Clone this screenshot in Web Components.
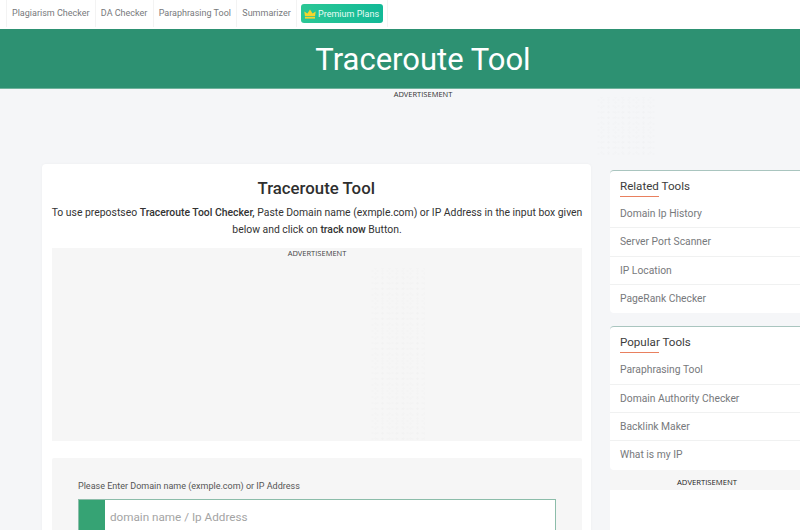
<!DOCTYPE html>
<html>
<head>
<meta charset="utf-8">
<title>Traceroute Tool</title>
<style>
    html, body { margin: 0; height: 530px; overflow: hidden; background: #f5f6f8; }
    body { font-family: Roboto, "Liberation Sans", sans-serif; }
</style>
</head>
<body>
<top-nav></top-nav>
<page-banner>Traceroute Tool</page-banner>
<ad-strip></ad-strip>
<page-layout>
    <tool-card></tool-card>
    <side-box slot="side" heading="Related Tools" items="Domain Ip History|Server Port Scanner|IP Location|PageRank Checker"></side-box>
    <side-box slot="side" heading="Popular Tools" items="Paraphrasing Tool|Domain Authority Checker|Backlink Maker|What is my IP"></side-box>
    <side-ad slot="side"></side-ad>
</page-layout>

<script>
// faint dotted texture left over in the empty ad slots
const speckle = `
    background-image:
        radial-gradient(circle, rgba(0,0,0,0.008) 1px, transparent 1.4px),
        radial-gradient(circle, rgba(0,0,0,0.006) 1px, transparent 1.4px);
    background-size: 5px 6px, 7px 5px;
    background-position: 0 0, 2px 3px;
`;

class TopNav extends HTMLElement {
    constructor() {
        super();
        this.attachShadow({ mode: 'open' });
    }

    connectedCallback() {
        const links = ['Plagiarism Checker', 'DA Checker', 'Paraphrasing Tool', 'Summarizer'];
        this.shadowRoot.innerHTML = `
            <style>
                :host {
                    display: flex;
                    align-items: flex-start;
                    height: 29px;
                    padding-left: 6px;
                    background: #fff;
                    font-size: 9px;
                    color: #77797c;
                }
                a {
                    display: block;
                    height: 27px;
                    line-height: 27px;
                    padding: 0 5.3px 0 5px;
                    border-left: 1px solid #f3f3f3;
                    white-space: nowrap;
                }
                .wrap {
                    display: flex;
                    align-items: center;
                    height: 27px;
                    padding: 0 4px;
                    border-left: 1px solid #f3f3f3;
                    border-right: 1px solid #f3f3f3;
                }
                .premium {
                    display: flex;
                    align-items: center;
                    gap: 2px;
                    box-sizing: border-box;
                    width: 82px;
                    height: 19px;
                    padding-left: 3px;
                    border-radius: 3px;
                    background: linear-gradient(90deg, #2bc795, #12b997);
                    color: #eafbf5;
                    white-space: nowrap;
                }
                svg { flex: none; }
            </style>
            ${links.map(l => `<a>${l}</a>`).join('')}
            <div class="wrap">
                <div class="premium">
                    <svg width="12" height="10" viewBox="0 0 12 10">
                        <path d="M1 7.2 0.3 2.4 3.4 4.4 6 0.6 8.6 4.4 11.7 2.4 11 7.2Z" fill="#f7d52c"/>
                        <rect x="1" y="8" width="10" height="1.6" fill="#f7d52c"/>
                    </svg>
                    <span>Premium Plans</span>
                </div>
            </div>
        `;
    }
}

class PageBanner extends HTMLElement {
    constructor() {
        super();
        this.attachShadow({ mode: 'open' });
    }

    connectedCallback() {
        this.shadowRoot.innerHTML = `
            <style>
                :host {
                    display: block;
                    height: 59px;
                    border-bottom: 1px solid #6fb29c;
                    background: #2d9172;
                    color: #fff;
                    font-size: 31px;
                    line-height: 62px;
                    text-align: center;
                    padding-left: 46px;
                }
            </style>
            <slot></slot>
        `;
    }
}

class AdStrip extends HTMLElement {
    constructor() {
        super();
        this.attachShadow({ mode: 'open' });
    }

    connectedCallback() {
        this.shadowRoot.innerHTML = `
            <style>
                :host {
                    display: flex;
                    justify-content: center;
                    height: 75px;
                    position: relative;
                    padding-left: 46px;
                    font-family: "Open Sans", sans-serif;
                    font-size: 7.5px;
                    line-height: 11px;
                    color: #333;
                }
                .noise {
                    position: absolute;
                    left: 596px;
                    top: 8px;
                    width: 60px;
                    height: 58px;
                    ${speckle}
                }
            </style>
            <span>ADVERTISEMENT</span>
            <div class="noise"></div>
        `;
    }
}

class PageLayout extends HTMLElement {
    constructor() {
        super();
        this.attachShadow({ mode: 'open' });
    }

    connectedCallback() {
        this.shadowRoot.innerHTML = `
            <style>
                :host {
                    display: grid;
                    grid-template-columns: 549px 230px;
                    column-gap: 19px;
                    padding-left: 42px;
                    width: 840px;
                    box-sizing: border-box;
                }
                .side {
                    display: flex;
                    flex-direction: column;
                    padding-top: 6px;
                    gap: 13.3px;
                }
            </style>
            <div><slot></slot></div>
            <div class="side"><slot name="side"></slot></div>
        `;
    }
}

class ToolCard extends HTMLElement {
    constructor() {
        super();
        this.attachShadow({ mode: 'open' });
    }

    connectedCallback() {
        this.shadowRoot.innerHTML = `
            <style>
                :host {
                    display: block;
                    box-sizing: border-box;
                    height: 400px;
                    padding: 14px 9px 0 10px;
                    background: #fff;
                    border-radius: 4px;
                    box-shadow: 0 0 3px rgba(0, 0, 0, 0.04);
                    color: #333;
                }
                h1 {
                    margin: 0 1.5px 0 0;
                    font-size: 16.8px;
                    font-weight: 500;
                    line-height: 20px;
                    text-align: center;
                    color: #2f2f2f;
                }
                p {
                    margin: 6px -3px 0;
                    font-size: 10.4px;
                    line-height: 17px;
                    text-align: center;
                }
                b { font-weight: 500; }
                .ad {
                    position: relative;
                    height: 193px;
                    margin-top: 10px;
                    background: #f6f6f6;
                    text-align: center;
                    font-family: "Open Sans", sans-serif;
                    font-size: 7.5px;
                    line-height: 10px;
                    color: #444;
                }
                .noise {
                    position: absolute;
                    left: 318px;
                    top: 20px;
                    width: 55px;
                    height: 172px;
                    ${speckle}
                }
                form {
                    display: block;
                    height: 100px;
                    margin-top: 17px;
                    padding: 22px 26px 0;
                    background: #f6f6f6;
                    border-radius: 2px;
                }
                label {
                    display: block;
                    font-size: 9px;
                    line-height: 13px;
                    color: #555;
                }
                .field {
                    display: flex;
                    height: 40px;
                    margin-top: 6px;
                    border: 1px solid #8cbdaa;
                    background: #fff;
                }
                .tag { width: 26px; background: #36a374; }
                .hint {
                    padding: 8px 0 0 5px;
                    font-size: 11.7px;
                    line-height: 19px;
                    color: #a4a4a4;
                }
            </style>
            <h1>Traceroute Tool</h1>
            <p>To use prepostseo <b>Traceroute Tool Checker,</b> Paste Domain name (exmple.com) or IP Address in the input box given below and click on <b>track now</b> Button.</p>
            <div class="ad">ADVERTISEMENT<div class="noise"></div></div>
            <form>
                <label>Please Enter Domain name (exmple.com) or IP Address</label>
                <div class="field">
                    <div class="tag"></div>
                    <div class="hint">domain name / Ip Address</div>
                </div>
            </form>
        `;
    }
}

class SideBox extends HTMLElement {
    constructor() {
        super();
        this.attachShadow({ mode: 'open' });
    }

    connectedCallback() {
        const items = this.getAttribute('items').split('|');
        this.shadowRoot.innerHTML = `
            <style>
                :host {
                    display: block;
                    background: #fff;
                    border-top: 1px solid #a9c5bf;
                    border-radius: 4px;
                    padding: 8px 0 1px;
                }
                h3 {
                    width: 39px;
                    margin: 0 0 0 10px;
                    padding-bottom: 3px;
                    border-bottom: 1px solid #e9805f;
                    font-size: 11.6px;
                    font-weight: 400;
                    line-height: 14px;
                    white-space: nowrap;
                    color: #3c3c3c;
                }
                ul { margin: 3px 0 0; padding: 0; list-style: none; }
                li {
                    height: 27.3px;
                    padding-left: 10px;
                    border-top: 1px solid #f0f1f1;
                    font-size: 10.3px;
                    line-height: 27px;
                    color: #77797c;
                }
                li:first-child { border-top: 0; }
            </style>
            <h3>${this.getAttribute('heading')}</h3>
            <ul>${items.map(i => `<li>${i}</li>`).join('')}</ul>
        `;
    }
}

class SideAd extends HTMLElement {
    constructor() {
        super();
        this.attachShadow({ mode: 'open' });
    }

    connectedCallback() {
        this.shadowRoot.innerHTML = `
            <style>
                :host {
                    display: block;
                    margin-top: -13.3px;
                    background: #fff;
                }
                div {
                    height: 20px;
                    padding-right: 36px;
                    background: #f6f6f6;
                    text-align: center;
                    font-family: "Open Sans", sans-serif;
                    font-size: 7.7px;
                    line-height: 24px;
                    color: #222;
                }
                .fill { height: 60px; background: #fff; }
            </style>
            <div>ADVERTISEMENT</div>
            <div class="fill"></div>
        `;
    }
}

customElements.define('top-nav', TopNav);
customElements.define('page-banner', PageBanner);
customElements.define('ad-strip', AdStrip);
customElements.define('page-layout', PageLayout);
customElements.define('tool-card', ToolCard);
customElements.define('side-box', SideBox);
customElements.define('side-ad', SideAd);
</script>
</body>
</html>
